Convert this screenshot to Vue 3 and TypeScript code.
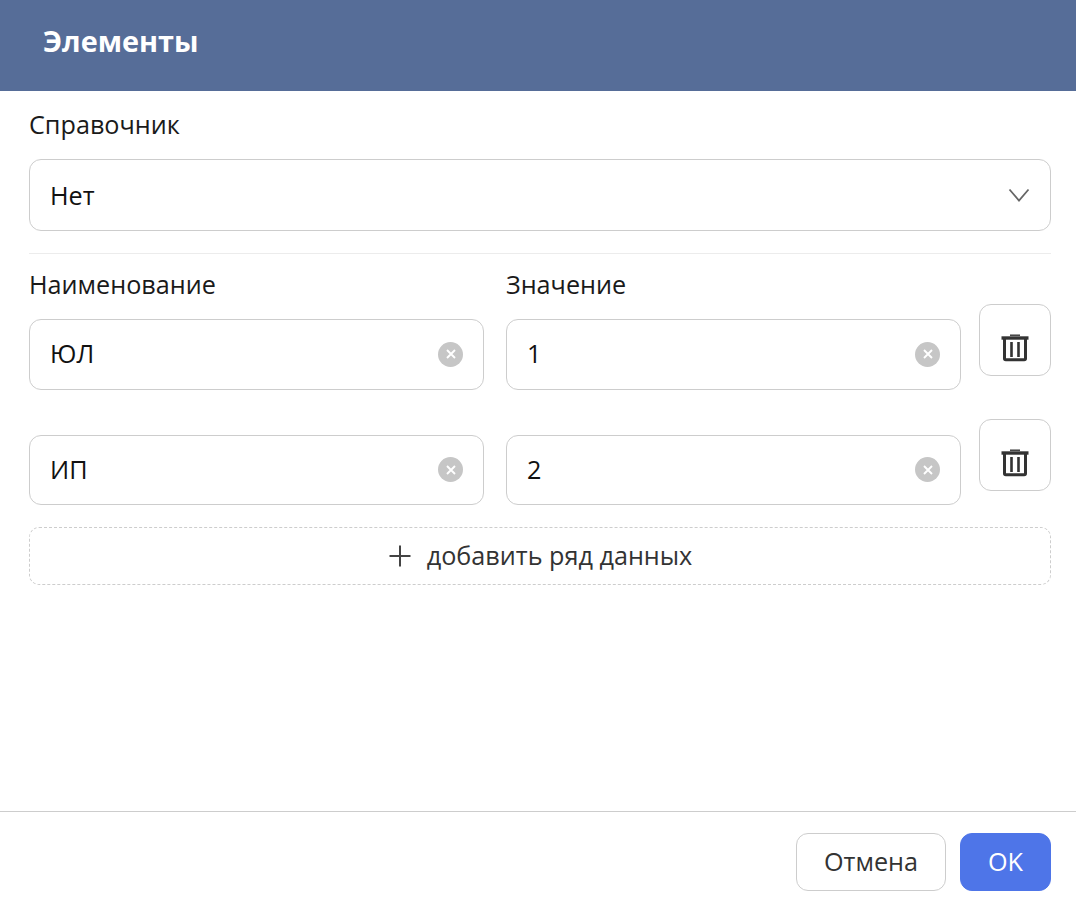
<script setup lang="ts">
import { ref } from 'vue'

const rows = ref([
  { id: 1, name: 'ЮЛ', value: '1' },
  { id: 2, name: 'ИП', value: '2' },
])
</script>

<template>
  <div class="dialog">
    <header class="head">Элементы</header>

    <main class="body">
      <div class="label">Справочник</div>
      <div class="field select">
        <span class="text">Нет</span>
        <svg class="chevron" width="22" height="14" viewBox="0 0 22 14" fill="none">
          <path d="M1.5 1.5 11 12.5 20.5 1.5" stroke="#666" stroke-width="1.8" />
        </svg>
      </div>

      <div class="divider"></div>

      <div class="heads">
        <div class="label">Наименование</div>
        <div class="label">Значение</div>
      </div>

      <div v-for="row of rows" :key="row.id" class="row">
        <div class="field">
          <span class="text">{{ row.name }}</span>
          <span class="clear">
            <svg width="10" height="10" viewBox="0 0 10 10"><path d="M1 1 9 9M9 1 1 9" stroke="#fff" stroke-width="1.9" /></svg>
          </span>
        </div>
        <div class="field">
          <span class="text">{{ row.value }}</span>
          <span class="clear">
            <svg width="10" height="10" viewBox="0 0 10 10"><path d="M1 1 9 9M9 1 1 9" stroke="#fff" stroke-width="1.9" /></svg>
          </span>
        </div>
        <button class="trash">
          <svg width="28" height="28" viewBox="0 0 28 28" fill="none" stroke="#333">
            <path d="M0.5 4H27.5" stroke-width="3.4" />
            <path d="M9 1.2H19" stroke-width="1.4" />
            <path d="M3.5 5V24.5Q3.5 25.8 4.8 25.8H23.2Q24.5 25.8 24.5 24.5V5" stroke-width="3" />
            <path d="M10.5 8V23M17.5 8V23" stroke-width="2.6" />
          </svg>
        </button>
      </div>

      <button class="add">
        <svg width="24" height="24" viewBox="0 0 24 24"><path d="M12 1.5V22.5M1.5 12H22.5" stroke="#444" stroke-width="2" /></svg>
        <span class="text">добавить ряд данных</span>
      </button>
    </main>

    <footer class="foot">
      <button class="btn"><span class="text">Отмена</span></button>
      <button class="btn primary"><span class="text">OK</span></button>
    </footer>
  </div>
</template>

<style scoped>
.dialog {
  display: flex;
  flex-direction: column;
  height: 906px;
  background: #fff;
  color: #111;
  font-family: "Open Sans", "Noto Sans", sans-serif;
  font-size: 25.2px;
}

.head {
  height: 91px;
  box-sizing: border-box;
  display: flex;
  align-items: center;
  padding: 0 0 10px 43px;
  background: #566d98;
  color: #fff;
  font-size: 28.8px;
  font-weight: 700;
}

.body {
  flex: 1;
  padding: 17px 25px 0 29px;
}

.label {
  height: 34px;
  line-height: 32px;
  color: #1a1a1a;
}

.text {
  position: relative;
  top: -1px;
}

.field {
  height: 100%;
  display: flex;
  align-items: center;
  justify-content: space-between;
  box-sizing: border-box;
  padding: 0 20px;
  border: 1px solid #cdcdcd;
  border-radius: 12px;
  background: #fff;
}

.select {
  height: 72px;
  margin-top: 17px;
}

.select .text {
  top: 0;
}

.divider {
  height: 1px;
  margin: 22px 0 14px;
  background: #ececec;
}

.heads {
  display: grid;
  grid-template-columns: 455px 455px;
  column-gap: 22px;
  height: 51px;
}

.row {
  display: grid;
  grid-template-columns: 455px 455px 72px;
  column-gap: 22px;
  margin-bottom: 45px;
  height: 70.5px;
}

.row .trash {
  margin-left: -4px;
  margin-top: -15.2px;
}

.clear {
  width: 25px;
  height: 25px;
  display: flex;
  align-items: center;
  justify-content: center;
  border-radius: 50%;
  background: #c6c6c6;
}

.trash {
  width: 72px;
  height: 72px;
  display: flex;
  align-items: center;
  justify-content: center;
  padding: 16px 0 0;
  border: 1px solid #cdcdcd;
  border-radius: 12px;
  background: #fff;
}

.add {
  width: 100%;
  height: 58px;
  display: flex;
  align-items: center;
  justify-content: center;
  gap: 15px;
  margin-top: -23px;
  padding: 0;
  border: 1px dashed #cdcdcd;
  border-radius: 10px;
  background: #fff;
  color: #333;
  font: inherit;
}

.foot {
  height: 95px;
  display: flex;
  justify-content: flex-end;
  gap: 14px;
  box-sizing: border-box;
  padding: 21px 25px 0 0;
  border-top: 1px solid #cdcdcd;
}

.btn {
  width: 150px;
  height: 58px;
  padding: 0;
  border: 1px solid #cdcdcd;
  border-radius: 12px;
  background: #fff;
  color: #333;
  font: inherit;
}

.primary {
  width: 91px;
  border-color: #4e75e8;
  background: #4e75e8;
  color: #fff;
}
</style>

<style>
html, body {
  margin: 0;
  background: #fff;
}
</style>
